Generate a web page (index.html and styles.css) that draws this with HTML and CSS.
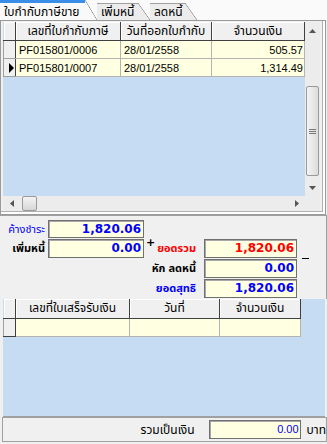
FILE: index.html
```html
<!DOCTYPE html>
<html lang="th">
<head>
    <meta charset="UTF-8">
    <title>ใบกำกับภาษีขาย</title>
    <link rel="stylesheet" href="styles.css">
</head>
<body>
<div class="window">
    <div class="tabs">
        <div class="tab active"><span class="tab-label">ใบกำกับภาษีขาย</span><span class="tab-slant"></span></div>
        <div class="tab"><span class="tab-label">เพิ่มหนี้</span><span class="tab-slant"></span></div>
        <div class="tab"><span class="tab-label">ลดหนี้</span><span class="tab-slant"></span></div>
    </div>

    <div class="tab-panel">
        <div class="grid-invoices">
            <div class="grid-body">
                <table class="grid-table">
                    <colgroup>
                        <col style="width:12px">
                        <col style="width:105px">
                        <col style="width:91px">
                        <col style="width:93px">
                    </colgroup>
                    <tr>
                        <th class="ind"></th>
                        <th>เลขที่ใบกำกับภาษี</th>
                        <th>วันที่ออกใบกำกับ</th>
                        <th>จำนวนเงิน</th>
                    </tr>
                    <tr>
                        <td class="ind"></td>
                        <td>PF015801/0006</td>
                        <td>28/01/2558</td>
                        <td class="num">505.57</td>
                    </tr>
                    <tr>
                        <td class="ind">
                            <svg width="5" height="10" viewBox="0 0 5 10"><path d="M0 0 L5 5 L0 10 Z" fill="#000"/></svg>
                        </td>
                        <td>PF015801/0007</td>
                        <td>28/01/2558</td>
                        <td class="num">1,314.49</td>
                    </tr>
                </table>
            </div>
            <div class="vscroll">
                <div class="sb-btn">
                    <svg width="7" height="4" viewBox="0 0 7 4"><path d="M0 4 L3.5 0 L7 4 Z" fill="#555"/></svg>
                </div>
                <div class="sb-track">
                    <div class="sb-thumb">
                        <svg width="7" height="5" viewBox="0 0 7 5"><path d="M0 0.5 H7 M0 2.5 H7 M0 4.5 H7" stroke="#777" stroke-width="1"/></svg>
                    </div>
                </div>
                <div class="sb-btn">
                    <svg width="7" height="4" viewBox="0 0 7 4"><path d="M0 0 L3.5 4 L7 0 Z" fill="#555"/></svg>
                </div>
            </div>
            <div class="hscroll">
                <div class="sb-btn">
                    <svg width="4" height="7" viewBox="0 0 4 7"><path d="M4 0 L0 3.5 L4 7 Z" fill="#555"/></svg>
                </div>
                <div class="sb-track">
                    <div class="sb-thumb"></div>
                </div>
                <div class="sb-btn">
                    <svg width="4" height="7" viewBox="0 0 4 7"><path d="M0 0 L4 3.5 L0 7 Z" fill="#555"/></svg>
                </div>
            </div>
            <div class="scroll-corner"></div>
        </div>
    </div>

    <div class="summary">
        <span class="lbl lbl-owe">ค้างชำระ</span>
        <div class="box box-owe">1,820.06</div>

        <span class="lbl lbl-add">เพิ่มหนี้</span>
        <div class="box box-add">0.00</div>
        <span class="sign plus">+</span>
        <span class="lbl lbl-total">ยอดรวม</span>
        <div class="box box-total">1,820.06</div>

        <span class="lbl lbl-less">หัก ลดหนี้</span>
        <div class="box box-less">0.00</div>
        <span class="minus"></span>

        <span class="lbl lbl-net">ยอดสุทธิ</span>
        <div class="box box-net">1,820.06</div>
    </div>

    <div class="grid-receipts">
        <table class="grid-table">
            <colgroup>
                <col style="width:12px">
                <col style="width:114px">
                <col style="width:90px">
                <col style="width:81px">
            </colgroup>
            <tr>
                <th class="ind"></th>
                <th>เลขที่ใบเสร็จรับเงิน</th>
                <th>วันที่</th>
                <th>จำนวนเงิน</th>
            </tr>
            <tr>
                <td class="ind ind-last"></td>
                <td></td>
                <td></td>
                <td></td>
            </tr>
        </table>
    </div>

    <div class="footer">
        <span class="footer-label">รวมเป็นเงิน</span>
        <div class="footer-box">0.00</div>
        <span class="footer-unit">บาท</span>
    </div>
</div>
</body>
</html>
```

FILE: styles.css
```css
* {
    box-sizing: border-box;
}

body {
    margin: 0;
    background-color: #f0f0f0;
    font-family: "Liberation Sans", "Noto Sans Thai", "Noto Sans", sans-serif;
    font-size: 11px;
    color: #000;
}

.window {
    width: 327px;
    height: 444px;
    overflow: hidden;
}

/* tabs */
.tabs {
    display: flex;
    align-items: flex-end;
    height: 20px;
    background-color: #fafafa;
}

.tab {
    display: flex;
    height: 17px;
}

.tab.active {
    height: 20px;
}

.tab-label {
    padding: 0 3px 0 4px;
    border-top: 1px solid #a0a0a0;
    background-color: #ececec;
    font-size: 12px;
    line-height: 16px;
    white-space: nowrap;
}

.tab.active .tab-label {
    width: 85px;
    padding-left: 4px;
    border-top: 3px solid #3b8ee8;
    background-color: #f9f9f9;
    line-height: 18px;
}

.tab:nth-child(2) .tab-label {
    width: 41px;
}

.tab:nth-child(3) .tab-label {
    width: 35px;
}

.tab-slant {
    width: 12px;
    background: linear-gradient(to top right, #ececec calc(50% - 0.6px), #8c8c8c 50%, #fafafa calc(50% + 0.6px));
}

.tab.active .tab-slant {
    background: linear-gradient(to top right, #f9f9f9 calc(50% - 0.6px), #8c8c8c 50%, #fafafa calc(50% + 0.6px));
}

/* first panel with the invoice grid */
.tab-panel {
    width: 326px;
    height: 195px;
    padding: 1px 5px 3px 2px;
    border: 1px solid #9a9a9a;
    box-shadow: inset -2px -2px 0 #fff, inset -3px -3px 0 #b0b0b0;
}

.grid-invoices {
    display: grid;
    grid-template-columns: 302px 15px;
    grid-template-rows: 174px 15px;
    background-color: #c6dcf3;
}

.grid-body {
    overflow: hidden;
}

.grid-table {
    border-collapse: collapse;
    table-layout: fixed;
}

.grid-table th {
    height: 18px;
    padding: 0;
    background-color: #f0f0f0;
    border-right: 1px solid #404040;
    border-bottom: 1px solid #404040;
    box-shadow: inset 1px 1px 0 #fff;
    font-size: 12px;
    font-weight: normal;
    text-align: center;
    white-space: nowrap;
    overflow: hidden;
}

.grid-table td {
    height: 18px;
    padding: 0 3px;
    background-color: #ffffe1;
    border: 1px solid #b4b4b4;
    white-space: nowrap;
    overflow: hidden;
}

.grid-table td.num {
    padding-right: 1px;
    text-align: right;
}

.grid-table td.ind {
    padding: 0 0 0 5px;
    background-color: #f0f0f0;
    border-color: #a0a0a0;
    border-right: 1px solid #404040;
    line-height: 0;
}

.grid-table td.ind-last {
    border-bottom: 1px solid #404040;
}

/* scrollbars */
.vscroll,
.hscroll {
    display: flex;
    background-color: #ececec;
}

.vscroll {
    flex-direction: column;
}

.sb-btn {
    display: flex;
    align-items: center;
    justify-content: center;
    flex: 0 0 17px;
}

.sb-track {
    flex: 1;
    display: flex;
}

.vscroll .sb-track {
    flex-direction: column;
    padding: 47px 1px 0;
}

.vscroll .sb-thumb {
    height: 90px;
}

.hscroll .sb-track {
    padding: 0 0 0 2px;
}

.hscroll .sb-thumb {
    width: 15px;
}

.sb-thumb {
    display: flex;
    align-items: center;
    justify-content: center;
    border: 1px solid #9a9a9a;
    border-radius: 2px;
    background: linear-gradient(to right, #f4f4f4, #dcdcdc);
}

.hscroll .sb-thumb {
    background: linear-gradient(to bottom, #f4f4f4, #d6d6d6);
}

.scroll-corner {
    background-color: #ececec;
}

/* totals */
.summary {
    display: grid;
    grid-template-columns: 48px 96px 60px 93px 1fr;
    grid-template-rows: 18px 19px 19px 19px;
    row-gap: 1px;
    height: 84px;
    padding-top: 4px;
    border-top: 1px solid #a0a0a0;
    border-right: 1px solid #a0a0a0;
}

.lbl {
    align-self: center;
    justify-self: end;
    padding-right: 3px;
    white-space: nowrap;
}

.lbl-owe { grid-area: 1 / 1; color: #0000ff; }
.lbl-add { grid-area: 2 / 1; font-weight: bold; }
.lbl-total { grid-area: 2 / 3; color: #ff0000; font-weight: bold; padding-right: 8px; }
.lbl-less { grid-area: 3 / 3; font-weight: bold; padding-right: 8px; }
.lbl-net { grid-area: 4 / 3; color: #0000ff; font-weight: bold; padding-right: 8px; }

.box {
    padding-right: 2px;
    background-color: #ffffe1;
    border: 1px solid #707070;
    box-shadow: inset 1px 1px 0 #a8a8a8;
    font-family: "DejaVu Sans", sans-serif;
    font-size: 12px;
    font-weight: bold;
    line-height: 17px;
    text-align: right;
    color: #0000ff;
}

.box-owe { grid-area: 1 / 2; line-height: 16px; }
.box-add { grid-area: 2 / 2; }
.box-total { grid-area: 2 / 4; color: #ff0000; }
.box-less { grid-area: 3 / 4; }
.box-net { grid-area: 4 / 4; }

.plus {
    grid-area: 2 / 3;
    justify-self: start;
    align-self: start;
    margin: -3px 0 0 2px;
    font-family: "DejaVu Sans", sans-serif;
    font-size: 11px;
    font-weight: bold;
}

.minus {
    grid-area: 2 / 5 / 4 / 6;
    align-self: center;
    width: 7px;
    height: 1px;
    margin-left: 5px;
    background-color: #000;
}

/* receipts grid */
.grid-receipts {
    height: 118px;
    margin-left: 3px;
    width: 322px;
    background-color: #c6dcf3;
    border-bottom: 1px solid #a0a0a0;
}

.grid-receipts .grid-table th {
    height: 19px;
}

/* footer */
.footer {
    display: flex;
    align-items: center;
    height: 25px;
    margin-left: 2px;
    border: 1px solid #a0a0a0;
    white-space: nowrap;
}

.footer-label {
    width: 195px;
    margin-right: 14px;
    font-size: 12px;
    text-align: right;
}

.footer-box {
    flex: 0 0 92px;
    height: 19px;
    padding-right: 1px;
    background-color: #ffffe1;
    border: 1px solid #707070;
    box-shadow: inset 1px 1px 0 #a8a8a8;
    line-height: 17px;
    text-align: right;
    color: #0000ff;
}

.footer-unit {
    margin-left: 6px;
    font-size: 12px;
}
```
